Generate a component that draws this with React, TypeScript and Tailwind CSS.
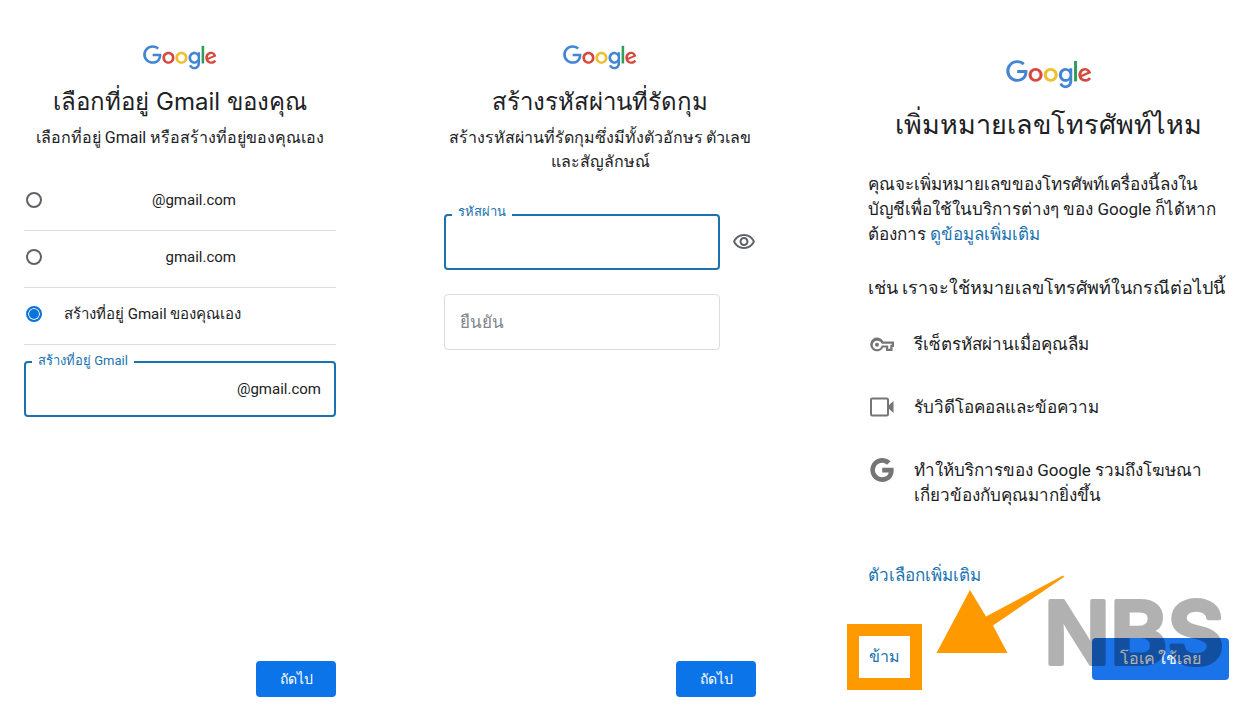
import React from "react";

function GoogleLogo({ className }: { className: string }) {
  return (
    <svg viewBox="0 0 272 92" className={className} role="img" aria-label="Google">
      <path fill="#d6493e" d="M115.75 47.18c0 12.77-9.99 22.18-22.25 22.18s-22.25-9.41-22.25-22.18C71.25 34.32 81.24 25 93.5 25s22.25 9.32 22.25 22.18zm-9.74 0c0-7.98-5.79-13.44-12.51-13.44S80.99 39.2 80.99 47.18c0 7.9 5.79 13.44 12.51 13.44s12.51-5.55 12.51-13.44z" />
      <path fill="#ecc02f" d="M163.75 47.18c0 12.77-9.99 22.18-22.25 22.18s-22.25-9.41-22.25-22.18c0-12.85 9.99-22.18 22.25-22.18s22.25 9.32 22.25 22.18zm-9.74 0c0-7.98-5.79-13.44-12.51-13.44s-12.51 5.46-12.51 13.44c0 7.9 5.79 13.44 12.51 13.44s12.51-5.55 12.51-13.44z" />
      <path fill="#4285d4" d="M209.75 26.34v39.82c0 16.38-9.66 23.07-21.08 23.07-10.75 0-17.22-7.19-19.66-13.07l8.48-3.53c1.51 3.61 5.21 7.87 11.17 7.87 7.31 0 11.84-4.51 11.84-13v-3.19h-.34c-2.18 2.69-6.38 5.04-11.68 5.04-11.09 0-21.25-9.66-21.25-22.09 0-12.52 10.16-22.26 21.25-22.26 5.29 0 9.49 2.35 11.68 4.96h.34v-3.61h9.25zm-8.56 20.92c0-7.81-5.21-13.52-11.84-13.52-6.72 0-12.35 5.71-12.35 13.52 0 7.73 5.63 13.36 12.35 13.36 6.63 0 11.84-5.63 11.84-13.36z" />
      <path fill="#2f9e58" d="M225 3v65h-9.5V3h9.5z" />
      <path fill="#d6493e" d="M262.02 54.48l7.56 5.04c-2.44 3.61-8.32 9.83-18.48 9.83-12.6 0-22.01-9.74-22.01-22.18 0-13.19 9.49-22.18 20.92-22.18 11.51 0 17.14 9.16 18.98 14.11l1.01 2.52-29.65 12.28c2.27 4.45 5.8 6.72 10.75 6.72 4.96 0 8.4-2.44 10.92-6.14zm-23.27-7.98l19.82-8.23c-1.09-2.77-4.37-4.7-8.23-4.7-4.95 0-11.84 4.37-11.59 12.93z" />
      <path fill="#4285d4" d="M35.29 41.41V32H67c.31 1.64.47 3.58.47 5.68 0 7.06-1.93 15.79-8.15 22.01-6.05 6.3-13.78 9.66-24.02 9.66C16.32 69.35.36 53.89.36 34.91.36 15.93 16.32.47 35.3.47c10.5 0 17.98 4.12 23.6 9.49l-6.64 6.64c-4.03-3.78-9.49-6.72-16.97-6.72-13.86 0-24.7 11.17-24.7 25.03 0 13.86 10.84 25.03 24.7 25.03 8.99 0 14.11-3.61 17.39-6.89 2.66-2.66 4.41-6.46 5.1-11.65l-22.49.01z" />
    </svg>
  );
}

function KeyIcon() {
  return (
    <svg viewBox="0 0 24 24" className="h-6 w-6 shrink-0 fill-[#757575]">
      <path d="M22.500 19h-6.500v-3.500h-2.800A6.900 6.900 0 1 1 13.300 9.500H24v5.500h-1.500zm-4.300-2.200h2.100v-4H21.800v-1.100H11.700c-.6-1.700-2.200-3-4.700-3a4.300 4.300 0 0 0 0 8.600c2.700 0 4.100-1.600 4.700-3.800h6.500z" />
      <circle cx="7" cy="12.700" r="2" />
    </svg>
  );
}

function VideoIcon() {
  return (
    <svg viewBox="0 0 24 24" className="h-6 w-6 shrink-0">
      <rect x="1" y="3.500" width="17" height="17" rx="1.200" fill="none" stroke="#757575" strokeWidth="2" />
      <path d="M18 11 23.500 6v12L18 13z" fill="#757575" />
    </svg>
  );
}

function GIcon() {
  return (
    <svg viewBox="0 0 24 24" className="h-6 w-6 shrink-0 fill-[#757575]">
      <path d="M12.2 9.800v4.700h6.600c-.6 2.800-3 4.700-6.600 4.700A7.200 7.200 0 1 1 17 6.700l3.500-3.500A12 12 0 1 0 12.200 24C19 24 23.700 19.200 23.700 12.300c0-.9-.1-1.700-.3-2.500z" />
    </svg>
  );
}

function EyeIcon() {
  return (
    <svg viewBox="0 0 24 24" className="h-6 w-6 fill-[#5f6368]">
      <path d="M12 6c3.790 0 7.170 2.130 8.820 5.500C19.170 14.870 15.790 17 12 17s-7.170-2.130-8.820-5.500C4.830 8.130 8.210 6 12 6m0-2C7 4 2.730 7.110 1 11.500 2.730 15.890 7 19 12 19s9.270-3.110 11-7.500C21.270 7.110 17 4 12 4zm0 5c1.380 0 2.500 1.120 2.500 2.500S13.380 14 12 14s-2.500-1.120-2.500-2.500S10.620 9 12 9m0-2c-2.480 0-4.500 2.020-4.500 4.500S9.520 16 12 16s4.500-2.020 4.500-4.500S14.480 7 12 7z" />
    </svg>
  );
}

const addresses = [
  { id: "first", text: "@gmail.com", hidden: true },
  { id: "second", text: "gmail.com", hidden: true },
  { id: "own", text: "สร้างที่อยู่ Gmail ของคุณเอง", hidden: false },
];

function NextButton() {
  return (
    <button className="mt-auto h-9 w-20 self-end rounded bg-[#0b74e8] text-sm text-white">ถัดไป</button>
  );
}

function AddressPanel() {
  return (
    <section className="flex flex-col pt-[45px] pr-[83px] pb-[17px] pl-6">
      <GoogleLogo className="h-[25px] w-[74px] self-center" />
      <h1 className="mt-[14px] text-center font-[Inter,'Noto_Sans',sans-serif] text-2xl leading-9 whitespace-nowrap">เลือกที่อยู่ Gmail ของคุณ</h1>
      <p className="mt-1.5 text-center text-base leading-6 whitespace-nowrap">เลือกที่อยู่ Gmail หรือสร้างที่อยู่ของคุณเอง</p>
      <div className="mt-6">
        {addresses.map((a) => (
          <label key={a.id} htmlFor={a.id} className="flex h-[57px] items-center border-b border-[#dadce0] pb-1 text-[15px]">
            <input
              type="radio"
              name="address"
              id={a.id}
              defaultChecked={a.id === "own"}
              className="ml-0.5 h-4 w-4 appearance-none rounded-full border-2 border-[#5f6368] bg-white checked:border-[#0b74d8] checked:bg-[#0b74d8] checked:shadow-[inset_0_0_0_1px_white]"
            />
            <span className={a.hidden ? "ml-[22px] w-[172px] text-right" : "ml-[22px]"}>{a.text}</span>
          </label>
        ))}
      </div>
      <div className="relative mt-4 flex h-14 items-center rounded border-2 border-[#1a73b0] pr-[13px]">
        <label htmlFor="gmail" className="absolute -top-3 left-1.5 bg-white px-1.5 text-[13px] leading-5 text-[#1a73b0]">สร้างที่อยู่ Gmail</label>
        <input id="gmail" className="h-full min-w-0 flex-1 bg-transparent px-3 outline-none" />
        <span className="text-[15px]">@gmail.com</span>
      </div>
      <NextButton />
    </section>
  );
}

function PasswordPanel() {
  return (
    <section className="flex flex-col pt-[45px] pr-[82px] pb-[17px] pl-[25px]">
      <GoogleLogo className="h-[25px] w-[74px] self-center" />
      <h1 className="mt-[14px] text-center font-[Inter,'Noto_Sans',sans-serif] text-2xl leading-9 whitespace-nowrap">สร้างรหัสผ่านที่รัดกุม</h1>
      <p className="mt-1.5 text-center text-base leading-6 whitespace-nowrap">
        สร้างรหัสผ่านที่รัดกุมซึ่งมีทั้งตัวอักษร ตัวเลข
        <br />
        และสัญลักษณ์
      </p>
      <div className="mt-10 flex items-center gap-3">
        <div className="relative h-14 flex-1">
          <label htmlFor="password" className="absolute -top-3 left-2 bg-white px-1.5 text-[13px] leading-5 text-[#1a73b0]">รหัสผ่าน</label>
          <input id="password" type="password" className="h-full w-full rounded border-2 border-[#1a73b0] px-3.5 outline-none" />
        </div>
        <button aria-label="แสดงรหัสผ่าน">
          <EyeIcon />
        </button>
      </div>
      <input
        type="password"
        aria-label="ยืนยัน"
        placeholder="ยืนยัน"
        className="mt-6 mr-9 h-14 rounded border border-[#dadce0] px-[15px] text-[17px] placeholder:text-[#80868b]"
      />
      <NextButton />
    </section>
  );
}

function PhonePanel() {
  return (
    <section className="flex flex-col pt-[60px] pr-7 pb-6 pl-[30px] text-[17px] leading-[25px]">
      <GoogleLogo className="h-[29px] w-[86px] self-center" />
      <h1 className="mt-4 text-center text-[27px] leading-10 whitespace-nowrap">เพิ่มหมายเลขโทรศัพท์ไหม</h1>
      <p className="mt-[27px] whitespace-nowrap">
        คุณจะเพิ่มหมายเลขของโทรศัพท์เครื่องนี้ลงใน
        <br />
        บัญชีเพื่อใช้ในบริการต่างๆ ของ Google ก็ได้หาก
        <br />
        ต้องการ <a href="#more" className="text-[#1a73b0]">ดูข้อมูลเพิ่มเติม</a>
      </p>
      <h2 className="mt-7 text-lg leading-[25px] whitespace-nowrap">เช่น เราจะใช้หมายเลขโทรศัพท์ในกรณีต่อไปนี้</h2>
      <ul className="mt-8 flex flex-col gap-[38px] whitespace-nowrap">
        <li className="flex gap-5 pl-0.5">
          <KeyIcon />
          รีเซ็ตรหัสผ่านเมื่อคุณลืม
        </li>
        <li className="flex gap-5 pl-0.5">
          <VideoIcon />
          รับวิดีโอคอลและข้อความ
        </li>
        <li className="flex gap-5 pl-0.5">
          <GIcon />
          <span>
            ทำให้บริการของ Google รวมถึงโฆษณา
            <br />
            เกี่ยวข้องกับคุณมากยิ่งขึ้น
          </span>
        </li>
      </ul>
      <a href="#options" className="mt-auto self-start text-[#1a73b0]">ตัวเลือกเพิ่มเติม</a>
      <div className="relative mt-9 -ml-[21px] flex items-center justify-between">
        <button className="h-[66px] w-[75px] border-12 border-[#ff9900] text-base text-[#1a73b0]">ข้าม</button>
        <button className="mt-1 h-[42px] w-[137px] rounded bg-[#1a73e8] text-base text-white">โอเค ใช้เลย</button>
        <svg viewBox="0 0 130 80" className="absolute bottom-9 left-[88px] h-20 w-[130px] fill-[#ff9900]">
          <path d="M35 16 1.500 79h71L58 51.500 129 3q0-1.500-1.500-1.300L51 42.500z" />
        </svg>
        <svg viewBox="0 0 190 120" className="pointer-events-none absolute right-0 bottom-0 h-[120px] w-[190px] opacity-30">
          <text x="5" y="94" strokeLinejoin="round" className="fill-black stroke-black stroke-4 font-[Inter,sans-serif] text-[87px] font-semibold">NBS</text>
        </svg>
      </div>
    </section>
  );
}

export default function App() {
  return (
    <main className="grid min-h-screen grid-cols-3 bg-white font-[Roboto,'Noto_Sans',sans-serif] text-[#202124]">
      <AddressPanel />
      <PasswordPanel />
      <PhonePanel />
    </main>
  );
}
